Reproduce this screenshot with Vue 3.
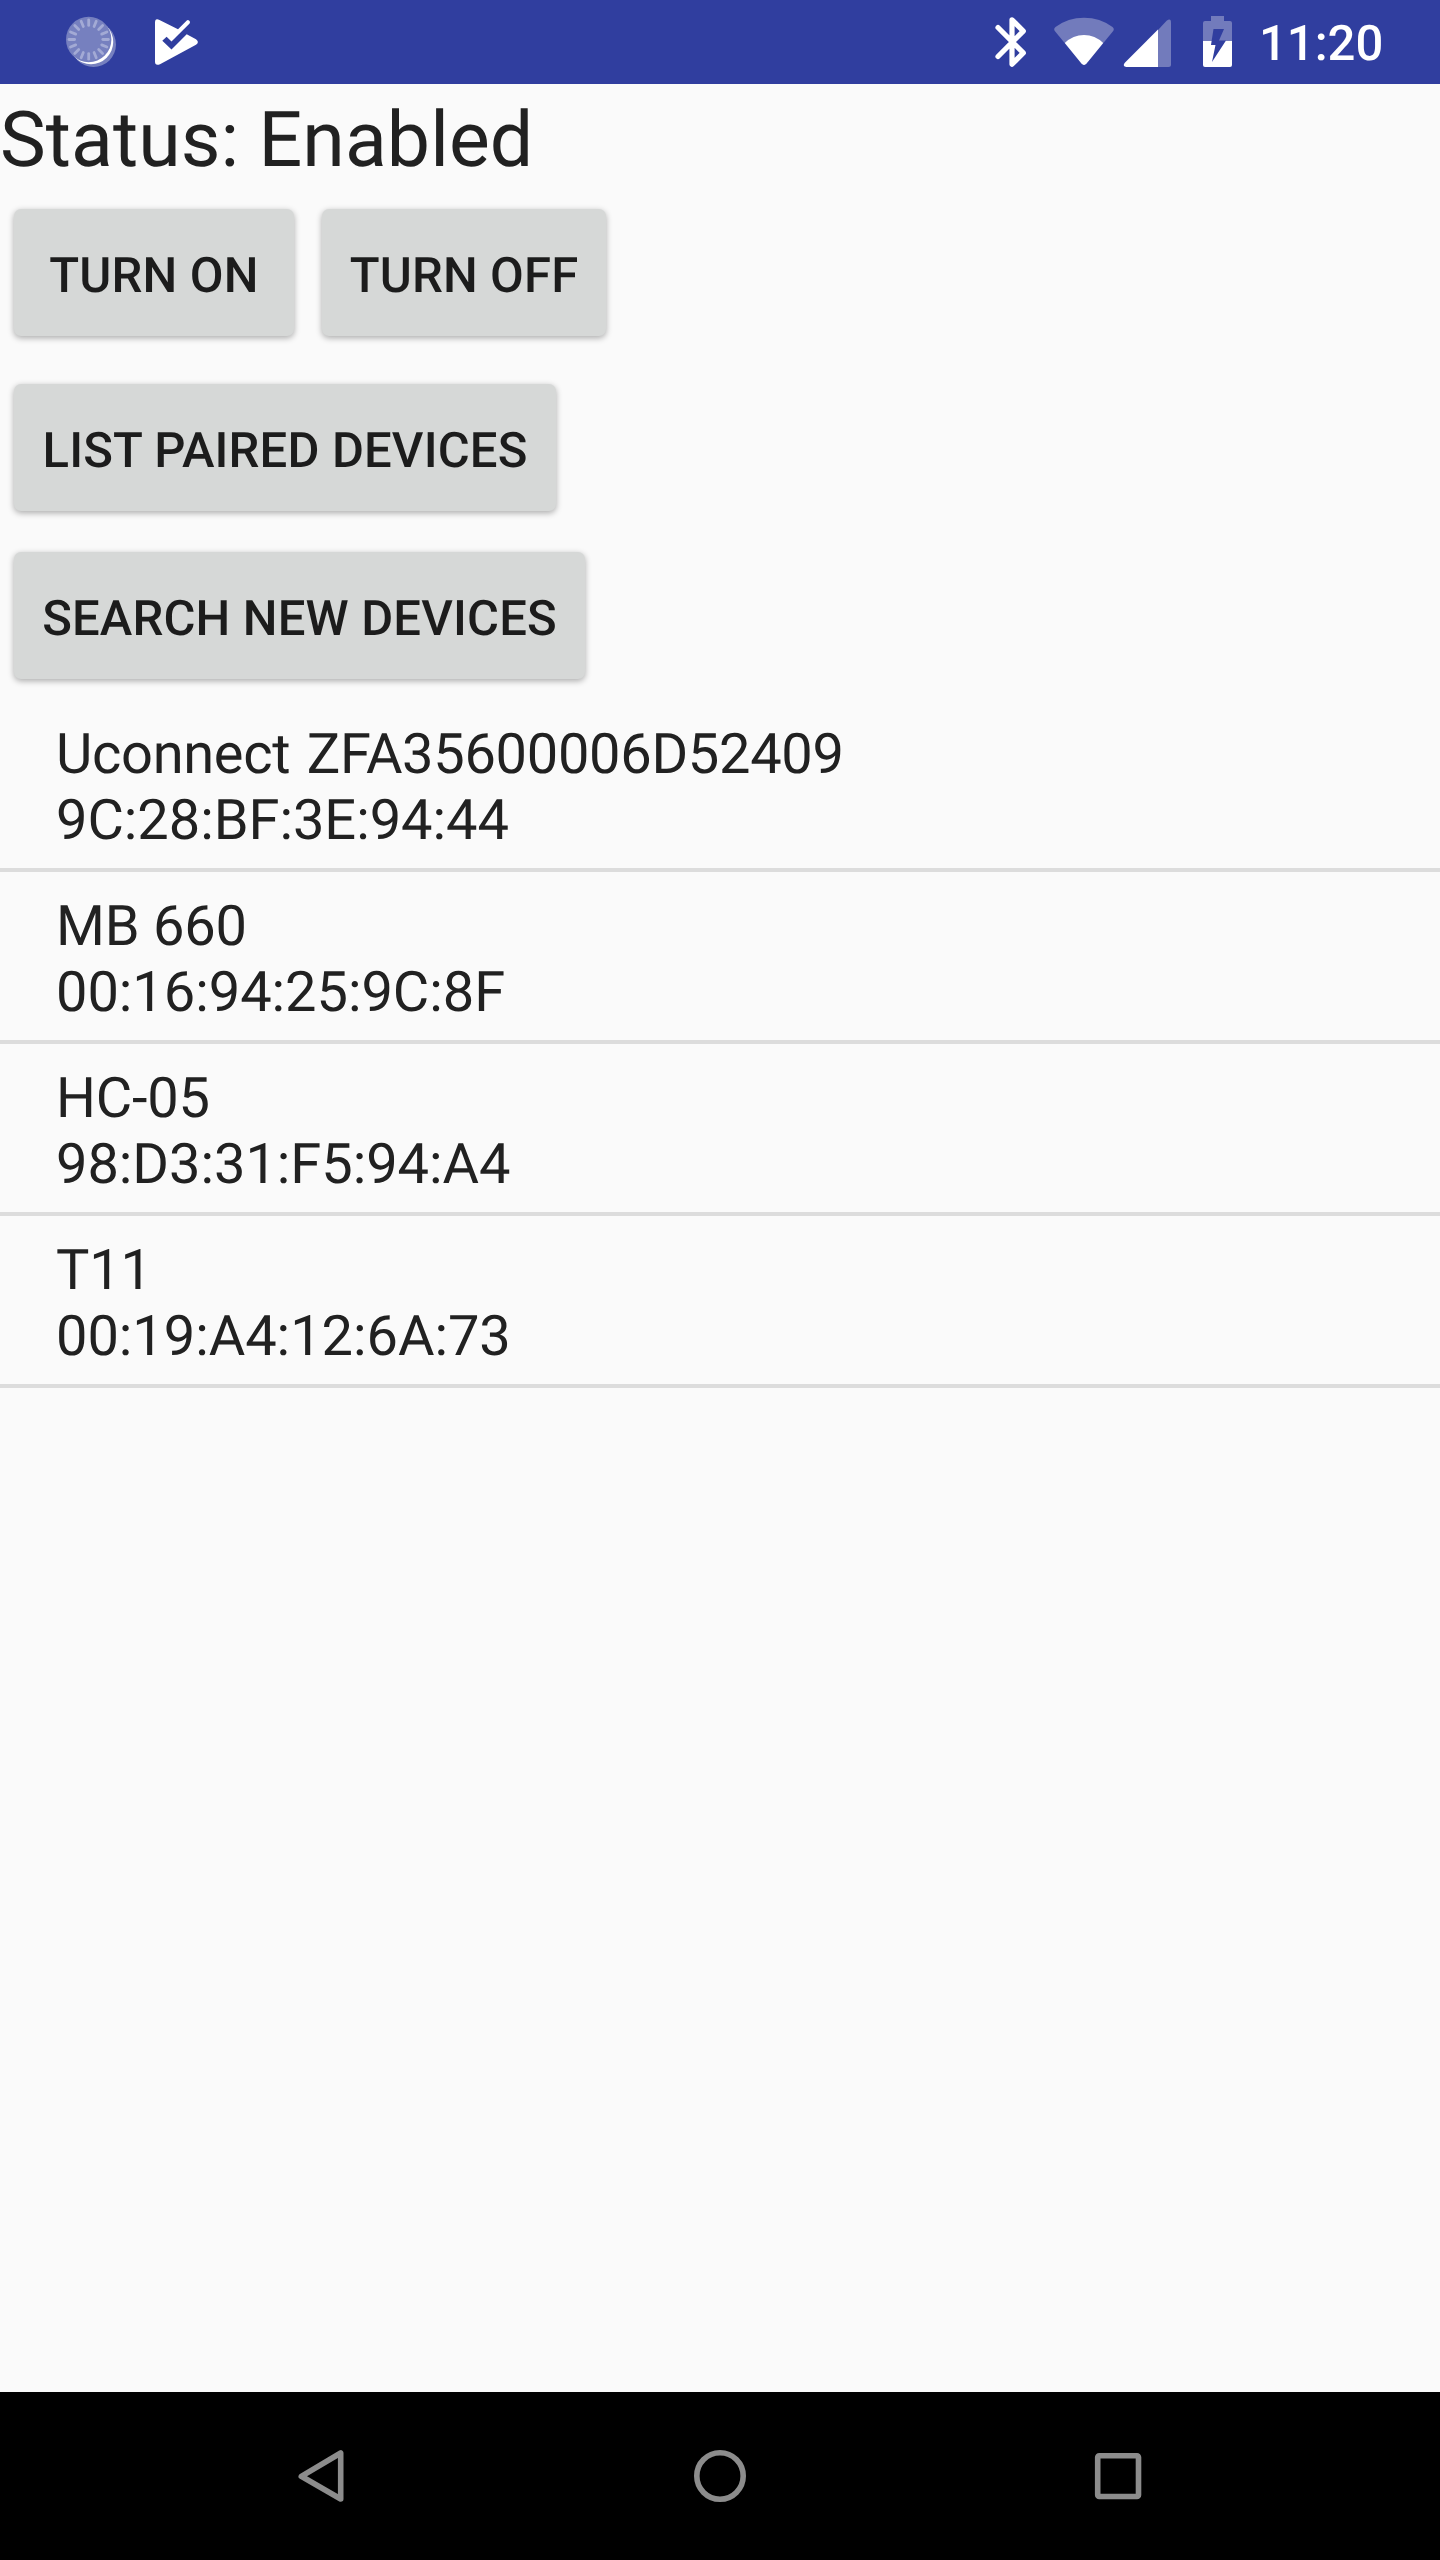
<script setup>
const rays = Array.from({ length: 16 }, (_, i) => i * 22.5)

const devices = [
  { name: 'Uconnect ZFA35600006D52409', address: '9C:28:BF:3E:94:44' },
  { name: 'MB 660', address: '00:16:94:25:9C:8F' },
  { name: 'HC-05', address: '98:D3:31:F5:94:A4' },
  { name: 'T11', address: '00:19:A4:12:6A:73' },
]
</script>

<template>
  <div class="screen">
    <header class="status-bar">
      <div class="notifications">
        <!-- sync spinner -->
        <svg width="60" height="84" viewBox="60 0 60 84">
          <circle cx="93.5" cy="44.5" r="22.5" fill="#7680bf" />
          <circle cx="91" cy="42" r="22.2" fill="#fff" />
          <circle cx="88.7" cy="39.5" r="22.7" fill="#7680bf" />
          <g stroke="#a3aad5" stroke-width="2.8" stroke-linecap="round">
            <line v-for="a in rays" :key="a" x1="88.7" y1="19.8" x2="88.7" y2="25.4" :transform="`rotate(${a} 88.7 39.5)`" />
          </g>
        </svg>
        <!-- play check -->
        <svg width="60" height="84" viewBox="145 0 60 84">
          <path d="M155 22.5Q155 17.6 159.5 19.9L178 29.3L186.8 20.4Q188 19.4 189.3 20.8Q190.7 22.2 189.6 23.4L171.5 41.6L166.6 36.7L162.3 40.7L171.5 49.5L186.7 34.2L196 39.2Q199.8 42 196 44.8L160 64.2Q155 66.2 155 61.5Z" fill="#fff" />
        </svg>
      </div>
      <div class="system">
        <!-- bluetooth -->
        <svg width="50" height="84" viewBox="985 0 50 84">
          <path d="M998 27.5L1023.3 52.9L1012 64.2V19.8L1023.3 31.1L998 56.5" fill="none" stroke="#fff" stroke-width="5.2" stroke-linecap="round" stroke-linejoin="round" />
        </svg>
        <!-- wifi -->
        <svg class="wifi" width="66" height="84" viewBox="1051 0 66 84">
          <path d="M1054.8 31Q1053.3 28.8 1055.5 27Q1068 17.8 1084 17.8Q1100 17.8 1112.5 27Q1114.7 28.8 1113.2 31L1086.5 63.6Q1084 66.2 1081.5 63.6Z" fill="#727bbc" />
          <path d="M1064.8 43Q1073 35 1084 35Q1095 35 1103.2 43L1086.5 63.6Q1084 66.2 1081.5 63.6Z" fill="#fff" />
        </svg>
        <!-- mobile signal -->
        <svg width="56" height="84" viewBox="1120 0 56 84">
          <path d="M1158 30L1166.6 20.8Q1171 17.6 1171 22.5V64.5Q1171 67 1168.5 67H1158Z" fill="#727bbc" />
          <path d="M1158 29.6V67H1126.3Q1122.3 66.2 1124.6 62.9Z" fill="#fff" />
        </svg>
        <!-- battery -->
        <svg class="battery" width="40" height="84" viewBox="1198 0 40 84">
          <path d="M1211 16H1224V21H1230Q1232 21 1232 23V41H1203V23Q1203 21 1205 21H1211Z" fill="#727bbc" />
          <path d="M1203 41H1232V65Q1232 67 1230 67H1205Q1203 67 1203 65Z" fill="#fff" />
          <path d="M1213.5 29H1224L1219 40.5H1226L1212 62L1215.5 45H1211Z" fill="#303e9f" />
        </svg>
        <span class="clock">11:20</span>
      </div>
    </header>

    <main>
      <div class="status">Status: Enabled</div>
      <div class="row">
        <button class="on">Turn on</button>
        <button class="off">Turn off</button>
      </div>
      <div class="row paired"><button class="list-btn">List paired devices</button></div>
      <div class="row search"><button class="search-btn">Search new devices</button></div>
      <ul>
        <li v-for="d in devices" :key="d.address">
          <div class="name">{{ d.name }}</div>
          <div class="address">{{ d.address }}</div>
        </li>
      </ul>
    </main>

    <nav>
      <svg width="80" height="80" viewBox="280 2436 80 80"><path d="M340.7 2453V2499L301.3 2476.3Z" /></svg>
      <svg width="80" height="80" viewBox="680 2436 80 80"><circle cx="720" cy="2476" r="23.2" /></svg>
      <svg width="80" height="80" viewBox="1080 2436 80 80"><rect x="1097.7" y="2455.7" width="40.8" height="40.8" rx="1.5" /></svg>
    </nav>
  </div>
</template>

<style>
body {
  margin: 0;
  background: #fafafa;
}
</style>

<style scoped>
.screen {
  width: 1440px;
  height: 2560px;
  display: flex;
  flex-direction: column;
  overflow: hidden;
  background: #fafafa;
  color: #212121;
  font-family: Roboto, sans-serif;
  font-kerning: normal;
  text-rendering: geometricPrecision;
}
.status-bar {
  height: 84px;
  flex: none;
  display: flex;
  justify-content: space-between;
  box-sizing: border-box;
  padding: 0 56px 0 60px;
  background: #303e9f;
}
svg {
  display: block;
  flex: none;
}
.notifications {
  display: flex;
  gap: 25px;
}
.system {
  display: flex;
  width: 399px;
}
.wifi {
  margin: 0 3px 0 16px;
}
.battery {
  margin-left: 22px;
}
.clock {
  margin-left: 21px;
  color: #fff;
  font-size: 49px;
  font-weight: 500;
  line-height: 88px;
  white-space: nowrap;
}
main {
  flex: 1;
}
.status {
  height: 125px;
  line-height: 112px;
  font-size: 77px;
  letter-spacing: 0.07px;
  white-space: nowrap;
}
.row {
  display: flex;
  gap: 28px;
  padding-left: 14px;
}
.paired {
  margin-top: 48px;
}
.search {
  margin-top: 41px;
}
button {
  height: 127px;
  padding: 5px 0 0;
  border: 0;
  border-radius: 7px;
  background: #d6d8d7;
  box-shadow: 0 2px 6px rgba(0, 0, 0, 0.32);
  color: #1c1c1c;
  font-family: inherit;
  font-size: 49px;
  font-weight: 500;
  letter-spacing: 0.15px;
  text-rendering: inherit;
  text-transform: uppercase;
  white-space: nowrap;
}
.on {
  width: 280px;
}
.off {
  width: 284px;
}
.list-btn {
  width: 542px;
}
.search-btn {
  width: 571px;
}
ul {
  list-style: none;
  margin: 21px 0 0;
  padding: 0;
}
li {
  height: 172px;
  box-sizing: border-box;
  padding: 21px 56px 0;
  border-bottom: 4px solid #dcdcdc;
  font-size: 56px;
  line-height: 66px;
}
.name {
  letter-spacing: -0.2px;
}
li:first-child .name {
  letter-spacing: -0.31px;
  word-spacing: 2.8px;
}
.address {
  letter-spacing: -0.05px;
}
nav {
  height: 168px;
  flex: none;
  display: flex;
  justify-content: space-between;
  align-items: center;
  box-sizing: border-box;
  padding: 0 280px;
  background: #000;
}
nav path,
nav circle,
nav rect {
  fill: none;
  stroke: #8c8c8c;
  stroke-width: 5.6;
  stroke-linejoin: round;
}
</style>
